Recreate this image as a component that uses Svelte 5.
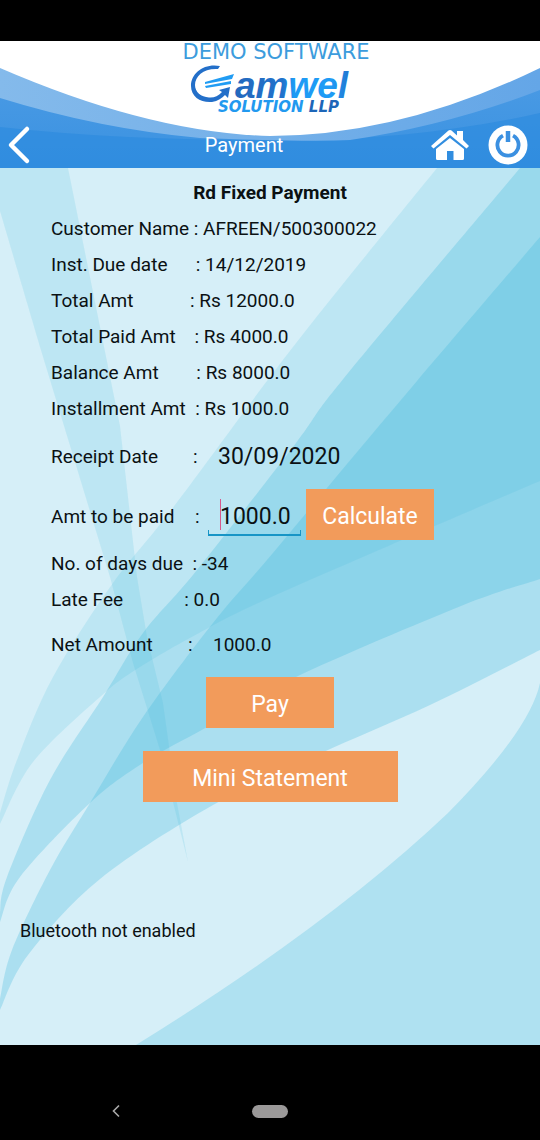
<script>
  const account = [
    { label: 'Customer Name', gap: 1, value: 'AFREEN/500300022' },
    { label: 'Inst. Due date', gap: 6, value: '14/12/2019' },
    { label: 'Total Amt', gap: 12, value: 'Rs 12000.0' },
    { label: 'Total Paid Amt', gap: 4, value: 'Rs 4000.0' },
    { label: 'Balance Amt', gap: 8, value: 'Rs 8000.0' },
    { label: 'Installment Amt', gap: 2, value: 'Rs 1000.0' }
  ];
  const dues = [
    { label: 'No. of days due', gap: 2, value: '-34' },
    { label: 'Late Fee', gap: 13, value: '0.0' }
  ];
  let amount = $state('1000.0');

  // Smooth curve segments through a list of points, for the leaf shapes
  function curve(points) {
    let d = '';
    for (let i = 0; i < points.length - 1; i++) {
      const a = points[i - 1] ?? points[i];
      const b = points[i];
      const c = points[i + 1];
      const e = points[i + 2] ?? c;
      d += `C${b[0] + (c[0] - a[0]) / 6} ${b[1] + (c[1] - a[1]) / 6} ${c[0] - (e[0] - b[0]) / 6} ${c[1] - (e[1] - b[1]) / 6} ${c[0]} ${c[1]}`;
    }
    return d;
  }
  const leaf = (upper, lower) =>
    `M${upper[0].join(' ')}${curve(upper)}L${lower[0].join(' ')}${curve(lower)}V168Z`;

  const leaves = [
    {
      opacity: 0.16,
      d: leaf(
        [[437, 168], [293, 347], [172, 509], [113, 583], [53, 677], [17, 760], [0, 813]],
        [[0, 824], [33, 762], [100, 697], [140, 667], [210, 627], [267, 599], [379, 550], [540, 481]]
      )
    },
    {
      opacity: 0.28,
      d: leaf(
        [[520, 168], [344, 378], [296, 443], [197, 570], [143, 633], [103, 697], [50, 780], [7, 877], [0, 913]],
        [[0, 922], [20, 877], [90, 803], [143, 763], [207, 727], [296, 677], [461, 606], [540, 579]]
      )
    },
    {
      opacity: 0.28,
      d: leaf(
        [[540, 237], [417, 381], [327, 488], [267, 560], [213, 623], [143, 717], [90, 803], [50, 870], [12, 950], [0, 999]],
        [[0, 1010], [28, 955], [100, 879], [213, 805], [317, 755], [430, 705], [540, 650]]
      )
    }
  ];
</script>

{#snippet rows(items)}
  <dl>
    {#each items as item}
      <div class="row">
        <dt>{item.label + ' '.repeat(item.gap)}</dt>
        <dd>: {item.value}</dd>
      </div>
    {/each}
  </dl>
{/snippet}

<div class="phone">
  <div class="status"></div>

  <header>
    <svg class="backdrop" viewBox="0 0 540 127" preserveAspectRatio="none" aria-hidden="true">
      <defs>
        <linearGradient id="deep" x1="0" y1="0" x2="0" y2="1">
          <stop offset="0.3" stop-color="#4a9ae4" />
          <stop offset="1" stop-color="#3a92e1" />
        </linearGradient>
        <linearGradient id="band" x1="0" y1="0" x2="1" y2="0">
          <stop offset="0" stop-color="#84baeb" />
          <stop offset="1" stop-color="#64a6e7" />
        </linearGradient>
      </defs>
      <rect width="540" height="127" fill="url(#deep)" />
      <path d="M0 86C90 96 180 99 270 99C370 100 460 90 540 72V127H0Z" fill="#2587de" opacity="0.5" />
      <path d="M0 0H540V49Q450 84 350 99Q310 101 200 97Q100 88 0 57Z" fill="url(#band)" />
      <path d="M0 0H540V27Q400 95 270 95Q150 92 0 27Z" fill="#fff" />
    </svg>

    <svg class="logo" viewBox="0 0 200 76" role="img" aria-label="Demo Software, Gamwel Solution LLP">
      <defs>
        <linearGradient id="word" x1="0" y1="0" x2="1" y2="0">
          <stop offset="0" stop-color="#2468bd" />
          <stop offset="0.42" stop-color="#2173cc" />
          <stop offset="0.52" stop-color="#1e9bf5" />
          <stop offset="0.85" stop-color="#1e9bf5" />
          <stop offset="1" stop-color="#2276d0" />
        </linearGradient>
      </defs>
      <text class="demo" x="106" y="18" text-anchor="middle">DEMO SOFTWARE</text>
      <path d="M50 25C34 22 21 32 21 45C21 56 31 62 42 61C48 60 52 57 55 54L58 57L60 46L49 49L52 51C48 55 44 57 39 56.500C31 56 25 51 25 44C25 35 34 27 48 28Z" fill="#236fc9" />
      <path d="M35 41L64 33L62 38L35 43Z" fill="#219cf3" />
      <path d="M35 45L61 40L61 43L36 47Z" fill="#219cf3" />
      <text class="word" x="65" y="57">amwel</text>
      <text class="sub" x="48" y="71">SOLUTION <tspan fill="#1d66b8">LLP</tspan></text>
    </svg>

    <nav class="bar">
      <button class="icon" aria-label="Back">
        <svg width="38" height="44" viewBox="0 0 38 44"><path d="M27 6L11 22L27 38" fill="none" stroke="#fff" stroke-width="4.5" stroke-linecap="round" stroke-linejoin="round" /></svg>
      </button>
      <h1>Payment</h1>
      <button class="icon" aria-label="Home">
        <svg width="40" height="40" viewBox="0 0 40 40" fill="#fff">
          <path d="M18.500 5.500Q20 4.500 21.500 5.500L27 10.500V6H33V15L39 21L36.500 23.500L20 10L3.500 23.500L1 21Z" />
          <path d="M20 13L34 24V33.500Q34 35 32.500 35H23.500V26H17V35H7.500Q6 35 6 33.500V24Z" />
        </svg>
      </button>
      <button class="icon" aria-label="Log out">
        <svg width="40" height="40" viewBox="0 0 40 40">
          <circle cx="20" cy="20" r="19.500" fill="#fff" />
          <path d="M15 10.600A10.600 10.600 0 1 0 25 10.600" fill="none" stroke="#3b90e1" stroke-width="3.800" />
          <path d="M20 6V17" stroke="#3b90e1" stroke-width="4.500" />
        </svg>
      </button>
    </nav>
  </header>

  <main>
    <svg class="backdrop" viewBox="0 168 540 877" preserveAspectRatio="none" aria-hidden="true">
      <g fill="#3cb8dc">
        <path d="M0 168H68L120 426L137 577L147 637L163 703L177 803L188 862L160 750L133 663L110 577L40 347L0 211Z" opacity="0.16" />
        {#each leaves as { d, opacity }}
          <path {d} {opacity} />
        {/each}
        <path d="M136 1045Q330 925 448 813Q530 730 540 683V1045Z" opacity="0.25" />
      </g>
    </svg>

    <h2>Rd Fixed Payment</h2>
    {@render rows(account)}

    <div class="row receipt">
      <span class="name">Receipt Date</span>
      <span class="colon">:</span>
      <span class="large">30/09/2020</span>
    </div>

    <div class="row pay-amount">
      <label class="name" for="amount">Amt to be paid</label>
      <span class="colon">:</span>
      <span class="field"><input id="amount" inputmode="decimal" bind:value={amount} /></span>
      <button class="action">Calculate</button>
    </div>

    {@render rows(dues)}

    <div class="row net">
      <span class="name">Net Amount</span>
      <span class="colon">:</span>
      <span>1000.0</span>
    </div>

    <div class="actions">
      <button class="action">Pay</button>
      <button class="action wide">Mini Statement</button>
    </div>

    <p>Bluetooth not enabled</p>
  </main>

  <footer>
    <button class="icon" aria-label="System back">
      <svg width="16" height="16" viewBox="0 0 16 16"><path d="M11 2.500L5.500 8L11 13.500" fill="none" stroke="#aaa" stroke-width="1.600" /></svg>
    </button>
    <button class="pill" aria-label="System home"></button>
    <span></span>
  </footer>
</div>

<style>
  :global(body) {
    margin: 0;
    background: #000;
  }
  .phone {
    display: flex;
    flex-direction: column;
    min-height: 100vh;
    font-family: Roboto, sans-serif;
    font-size: 19px;
    line-height: 36px;
    color: #0b1113;
  }
  .status {
    height: 41px;
    background: #000;
  }
  header,
  main {
    position: relative;
    isolation: isolate;
  }
  .backdrop {
    position: absolute;
    inset: 0;
    z-index: -1;
    width: 100%;
    height: 100%;
  }
  header {
    display: flex;
    flex-direction: column;
  }
  .logo {
    align-self: center;
    width: 200px;
    height: 76px;
  }
  .demo {
    font: 21px "DejaVu Sans", sans-serif;
    fill: #3c9cdd;
  }
  .word {
    font: italic bold 37px "Liberation Sans", sans-serif;
    fill: url(#word);
  }
  .sub {
    font: italic bold 15px "DejaVu Sans", sans-serif;
    fill: #2299ef;
  }
  .bar {
    display: flex;
    align-items: center;
    height: 51px;
    padding: 5px 12px 0 0;
    box-sizing: border-box;
    gap: 18px;
  }
  button {
    border: 0;
    padding: 0;
    font-family: inherit;
  }
  .icon {
    display: flex;
    background: none;
  }
  h1 {
    flex: 1;
    margin: 0;
    padding-left: 20px;
    font-size: 20px;
    font-weight: 400;
    color: #fff;
    text-align: center;
  }
  main {
    flex: 1;
    padding: 7px 0 12px;
    background: #d6eff8;
  }
  h2 {
    margin: 0;
    font-size: 19px;
    text-align: center;
  }
  dl,
  dd,
  p {
    margin: 0;
  }
  .row {
    display: flex;
    align-items: center;
    padding-left: 51px;
    white-space: pre;
  }
  .name {
    width: 142px;
  }
  .colon {
    width: 25px;
  }
  .large {
    font-size: 23px;
  }
  .receipt {
    height: 48px;
    padding-top: 6px;
  }
  .pay-amount {
    padding-top: 8px;
    padding-bottom: 6px;
  }
  .pay-amount .name {
    width: 144px;
    padding-top: 4px;
  }
  .pay-amount .colon {
    width: 13px;
    padding-top: 4px;
  }
  .field {
    position: relative;
    width: 93px;
    margin-right: 5px;
  }
  .field::before {
    content: "";
    position: absolute;
    top: 5px;
    left: 12px;
    width: 1px;
    height: 31px;
    background: #d8588c;
  }
  .field::after {
    content: "";
    position: absolute;
    inset: auto 0 0;
    height: 4px;
    border: solid #1795c6;
    border-width: 0 1px 2px;
  }
  input {
    display: block;
    box-sizing: border-box;
    width: 100%;
    height: 42px;
    padding: 3px 0 0 12px;
    border: 0;
    outline: 0;
    background: none;
    font: 23px Roboto, sans-serif;
    color: inherit;
  }
  .action {
    width: 128px;
    height: 51px;
    padding-top: 3px;
    background: #f29b5b;
    font-size: 23px;
    color: #fff;
  }
  .wide {
    width: 255px;
  }
  .net {
    height: 54px;
  }
  .net .name {
    width: 137px;
  }
  .actions {
    display: flex;
    flex-direction: column;
    align-items: center;
    gap: 23px;
    padding-top: 5px;
  }
  p {
    padding: 111px 20px 0;
    font-size: 18px;
  }
  footer {
    display: grid;
    grid-template-columns: 1fr auto 1fr;
    align-items: center;
    justify-items: center;
    height: 95px;
    padding-top: 37px;
    box-sizing: border-box;
    background: #000;
  }
  footer .icon {
    margin-right: 20px;
  }
  .pill {
    width: 36px;
    height: 13px;
    border-radius: 7px;
    background: #9b9999;
  }
</style>
